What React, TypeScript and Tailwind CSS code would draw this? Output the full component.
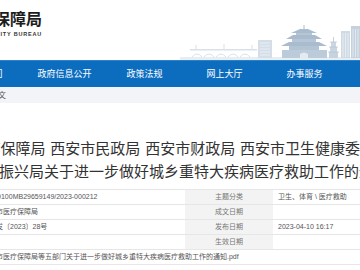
const navItems = ['机构部门', '政府信息公开', '政策法规', '网上大厅', '办事服务', '互动交流'];

const rows = [
  ['索 引 号', '11610100MB29659149/2023-000212', '主题分类', '卫生、体育 \\ 医疗救助'],
  ['发布机构', '西安市医疗保障局', '成文日期', ''],
  ['文　　号', '医保发〔2023〕28号', '发布日期', '2023-04-10 16:17'],
  ['标　　题', '', '生效日期', ''],
];

function Skyline() {
  return (
    <svg width="180" height="40" viewBox="180 20 180 40" className="self-end">
      {/* ground */}
      <rect x="180" y="57" width="180" height="3" fill="#e6edf3" />
      {/* bridge */}
      <rect x="190" y="49" width="67" height="1.5" fill="#d8e1ea" />
      <path d="M192 57 Q197 51 202 57 M204 57 Q209 51 214 57 M216 57 Q221 51 226 57 M228 57 Q233 51 238 57 M240 57 Q245 51 250 57" stroke="#dae3eb" strokeWidth="1" fill="none" />
      <path d="M196 49 V45 M224 49 V44 M252 49 V45" stroke="#d8e1ea" strokeWidth="1" />
      {/* block building */}
      <rect x="258" y="40" width="14" height="18" fill="#d5dee8" />
      <path d="M260 43 H270 M260 46 H270 M260 49 H270 M260 52 H270 M260 55 H270" stroke="#eef2f6" strokeWidth="0.8" />
      {/* bell tower */}
      <rect x="282" y="50" width="45" height="8" fill="#bccbd9" />
      <path d="M300 58 V54 Q304 51 308 54 V58 Z" fill="#e4eaf1" />
      <rect x="289" y="45" width="30" height="5" fill="#b3c4d4" />
      <polygon points="281,46 327,46 319,42 289,42" fill="#a9bccf" />
      <rect x="292" y="38" width="24" height="4" fill="#b6c6d6" />
      <polygon points="286,39 322,39 315,35 293,35" fill="#a9bccf" />
      <rect x="296" y="32" width="16" height="3" fill="#b6c6d6" />
      <polygon points="291,33 317,33 308,29 300,29" fill="#a9bccf" />
      <path d="M304 29 V25" stroke="#a9bccf" strokeWidth="1" />
      {/* pagoda */}
      <rect x="329" y="52" width="9" height="6" fill="#c6d2de" />
      <rect x="330" y="47" width="7" height="5" fill="#c9d5e0" />
      <rect x="331" y="42" width="5" height="5" fill="#ccd7e2" />
      <path d="M328 52 H339 M329 47 H338 M330 42 H337" stroke="#b8c6d4" strokeWidth="0.8" />
      <path d="M333.5 42 V37" stroke="#b8c6d4" strokeWidth="0.8" />
      {/* towers */}
      <rect x="341" y="31" width="9" height="27" fill="#d0dae4" />
      <path d="M343 33 V57 M345.5 33 V57 M348 33 V57" stroke="#ebf0f5" strokeWidth="0.8" />
      <rect x="351" y="26" width="9" height="32" fill="#c5d2de" />
      <path d="M353 29 V57 M355.5 29 V57 M358 29 V57" stroke="#e8eef4" strokeWidth="0.8" />
    </svg>
  );
}

export default function App() {
  return (
    <div className="w-[360px] h-[270px] overflow-hidden bg-white font-['Noto_Sans_CJK_SC',sans-serif]">
      {/* Header */}
      <header className="h-[60px] flex justify-between">
        <div className="w-[42px] pt-[9px] flex flex-col items-end whitespace-nowrap">
          <div className="text-[16px] font-bold leading-[19px] text-[#1d1d1d]">西安市医疗保障局</div>
          <div className="mt-[3px] text-[5.5px] font-bold leading-[7px] tracking-[0.8px] text-[#333] font-['Liberation_Sans',sans-serif]">
            XI'AN HEALTHCARE SECURITY BUREAU
          </div>
        </div>
        <Skyline />
      </header>

      {/* Nav */}
      <nav className="h-[27px] bg-[#0c6dbf] border-t border-[#2a82cc] flex items-center whitespace-nowrap">
        <div className="flex ml-[-55.5px]">
          {navItems.map((item) => (
            <span key={item} className="w-[80px] shrink-0 text-center text-[9px] text-white">
              {item}
            </span>
          ))}
        </div>
      </nav>

      {/* Breadcrumb */}
      <div className="h-[16px] bg-[#f2f4f7] flex items-center whitespace-nowrap">
        <span className="ml-[-10px] text-[8px] text-[#555]">正文</span>
      </div>

      {/* Title */}
      <div className="pt-[33px] text-[15px] leading-[23px] text-[#333] whitespace-nowrap [word-spacing:1.5px]">
        <div className="ml-[-74.5px]">西安市医疗保障局 西安市民政局 西安市财政局 西安市卫生健康委员会</div>
        <div className="ml-[-76px]">西安市乡村振兴局关于进一步做好城乡重特大疾病医疗救助工作的通知</div>
      </div>

      {/* Info table */}
      <div className="mt-[7px] ml-[-110px] w-[583px] border-t border-[#e6e6e6] text-[7px] text-[#555] whitespace-nowrap font-['Liberation_Sans','Noto_Sans_CJK_SC',sans-serif]">
        {rows.map((r) => (
          <div key={r[2]} className="grid grid-cols-[82px_213px_88px_200px] h-[15px] border-b border-[#e6e6e6]">
            <div className="bg-[#f3f3f3] flex items-center justify-center text-[#777]">{r[0]}</div>
            <div className="pl-[10px] flex items-center">{r[1]}</div>
            <div className="bg-[#f3f3f3] flex items-center justify-center text-[#777]">{r[2]}</div>
            <div className="pl-[5px] flex items-center">{r[3]}</div>
          </div>
        ))}
        <div className="grid grid-cols-[82px_501px] h-[15px] border-b border-[#e6e6e6]">
          <div className="bg-[#f3f3f3] flex items-center justify-center text-[#777]">附　　件</div>
          <div className="pl-[10px] flex items-center">西安市医疗保障局等五部门关于进一步做好城乡重特大疾病医疗救助工作的通知.pdf</div>
        </div>
      </div>
    </div>
  );
}
